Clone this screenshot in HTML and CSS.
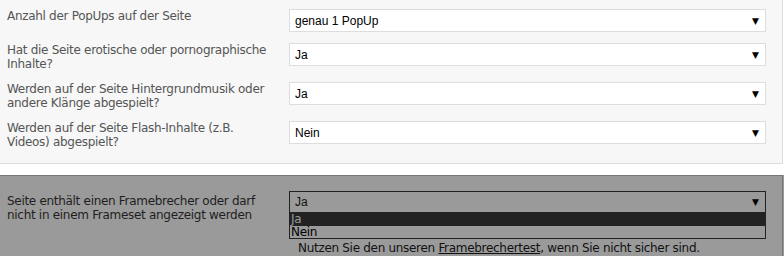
FILE: index.html
```html
<!DOCTYPE html>
<html lang="de">

<head>
    <title>Seite bewerten</title>
    <link rel="stylesheet" href="styles.css">
</head>

<body>
    <div class="panel">
        <div class="row">
            <div class="label">Anzahl der PopUps auf der Seite</div>
            <div class="select"><span>genau 1 PopUp</span><span class="arrow">&#9660;</span></div>
        </div>
        <div class="row">
            <div class="label">Hat die Seite erotische oder pornographische Inhalte?</div>
            <div class="select"><span>Ja</span><span class="arrow">&#9660;</span></div>
        </div>
        <div class="row">
            <div class="label">Werden auf der Seite Hintergrundmusik oder andere Klänge abgespielt?</div>
            <div class="select"><span>Ja</span><span class="arrow">&#9660;</span></div>
        </div>
        <div class="row">
            <div class="label">Werden auf der Seite Flash-Inhalte (z.B. Videos) abgespielt?</div>
            <div class="select"><span>Nein</span><span class="arrow">&#9660;</span></div>
        </div>
    </div>

    <div class="shade">
        <div class="panel dim">
            <div class="row">
                <div class="label">Seite enthält einen Framebrecher oder darf nicht in einem Frameset angezeigt werden</div>
                <div class="field">
                    <div class="select open"><span>Ja</span><span class="arrow">&#9660;</span></div>
                    <ul class="options">
                        <li class="active">Ja</li>
                        <li>Nein</li>
                    </ul>
                    <p class="hint">Nutzen Sie den unseren <a href="#">Framebrechertest</a>, wenn Sie nicht sicher sind.</p>
                </div>
            </div>
        </div>
    </div>
</body>

</html>
```

FILE: styles.css
```css
body {
    margin: 0;
    padding: 0;
    background-color: #fff;
    font-family: "DejaVu Sans", Verdana, sans-serif;
    font-size: 12px;
    letter-spacing: -0.3px;
}

.panel {
    width: 766px;
    padding: 9px 16px 14px 0;
    background-color: #f7f7f7;
    border-right: 1px solid #ddd;
    border-bottom: 1px solid #ddd;
}

.row {
    display: flex;
    align-items: flex-start;
    margin-bottom: 11px;
}

.row:last-child {
    margin-bottom: 0;
}

.label {
    width: 262px;
    padding-left: 7px;
    padding-right: 20px;
    line-height: 14px;
    color: #555;
}

.select {
    flex: 1;
    display: flex;
    justify-content: space-between;
    align-items: center;
    height: 21px;
    padding: 0 6px 0 5px;
    background-color: #fff;
    border: 1px solid #ddd;
    font-family: "Liberation Sans", Arial, sans-serif;
    font-size: 12px;
    letter-spacing: 0;
    color: #000;
}

.select .arrow {
    font-family: "DejaVu Sans", sans-serif;
    font-size: 9px;
    color: #000;
}

/* greyed out section below */
.shade {
    margin-top: 11px;
    background-color: #9a9a9a;
    height: 81px;
    overflow: hidden;
}

.panel.dim {
    background-color: #9a9a9a;
    border-top: 1px solid #777;
    border-right: 1px solid #777;
    border-bottom: none;
    padding-top: 15px;
    padding-bottom: 0;
    height: 65px;
}

.dim .label {
    color: #1e1e1e;
    padding-top: 3px;
}

.field {
    flex: 1;
}

.select.open {
    height: 20px;
    background-color: #9a9a9a;
    border-color: #222;
    color: #111;
}

.options {
    list-style: none;
    margin: 0;
    padding: 0;
    border: 1px solid #222;
    border-top: none;
}

.options li {
    height: 12px;
    line-height: 12px;
    padding-left: 1px;
    color: #000;
}

.options li.active {
    height: 13px;
    line-height: 13px;
    background-color: #222;
    color: #9a9a9a;
}

.hint {
    margin: 2px 0 0 9px;
    line-height: 14px;
    color: #111;
}

.hint a {
    color: #111;
    text-decoration: underline;
}
```
